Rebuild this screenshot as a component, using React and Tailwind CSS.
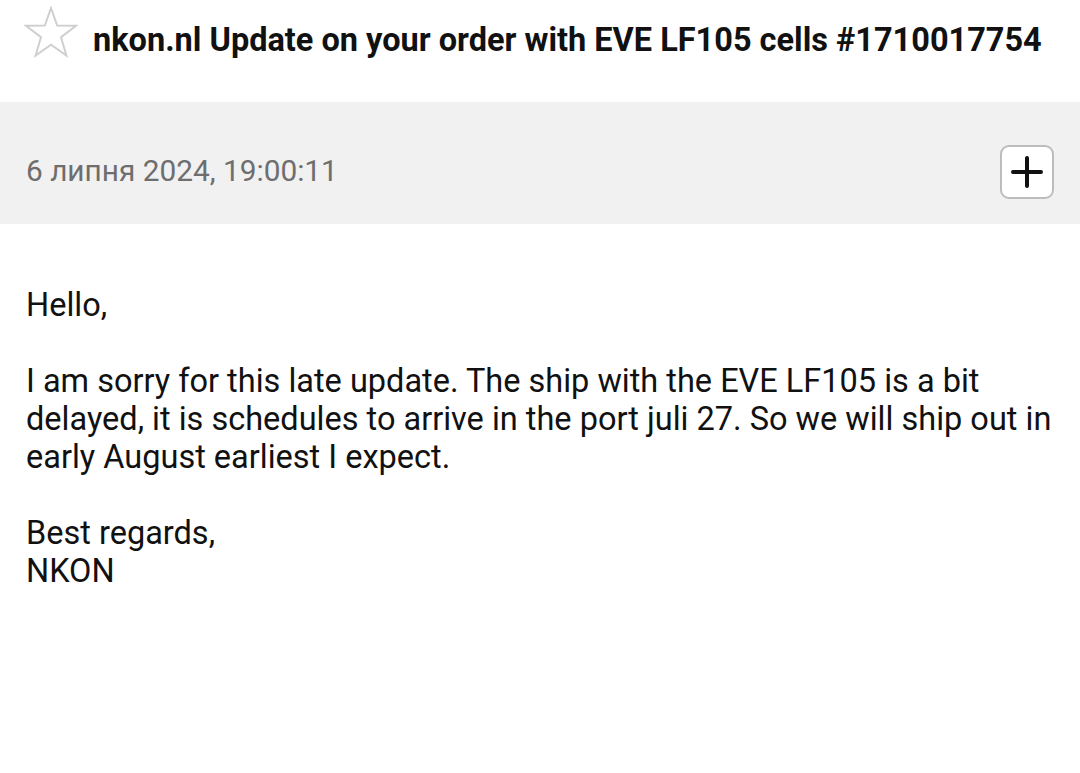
export default function App() {
  return (
    <div className="w-[1080px] h-[773px] bg-white overflow-hidden" style={{ fontFamily: "Roboto, 'Noto Sans', sans-serif" }}>
      <div className="h-[102px] flex items-start pt-[6px] pl-[24px]">
        <svg width="54" height="52" viewBox="0 0 54 52" className="shrink-0">
          <path d="M27 2 L33.2 19.5 L52 19.8 L37 31.2 L42.4 49.5 L27 38.8 L11.6 49.5 L17 31.2 L2 19.8 L20.8 19.5 Z" fill="none" stroke="#cfcfcf" strokeWidth="2" strokeLinejoin="miter" />
        </svg>
        <div className="ml-[15px] mt-[14px] text-[32.5px] leading-[40px] font-bold text-[#111] whitespace-nowrap">
          nkon.nl Update on your order with EVE LF105 cells #1710017754
        </div>
      </div>
      <div className="h-[122px] bg-[#f1f1f1] flex items-start justify-between pt-[43px] pl-[26px] pr-[26px]">
        <div className="mt-[8px] text-[29.8px] leading-[36px] text-[#6e6e6e]">6 липня 2024, 19:00:11</div>
        <div className="w-[54px] h-[54px] rounded-[9px] border-2 border-[#bdbdbd] bg-white flex items-center justify-center">
          <svg width="32" height="32" viewBox="0 0 32 32">
            <path d="M16 2 V30 M2 16 H30" stroke="#111" strokeWidth="4" strokeLinecap="round" />
          </svg>
        </div>
      </div>
      <div className="pl-[26px] pr-[20px] pt-[62px] text-[32.5px] leading-[38px] text-[#111]">
        <p>Hello,</p>
        <p className="mt-[38px]">
          I am sorry for this late update. The ship with the EVE LF105 is a bit delayed, it is schedules to arrive in the port juli 27. So we will ship out in early August earliest I expect.
        </p>
        <p className="mt-[38px]">Best regards,</p>
        <p>NKON</p>
      </div>
    </div>
  );
}
